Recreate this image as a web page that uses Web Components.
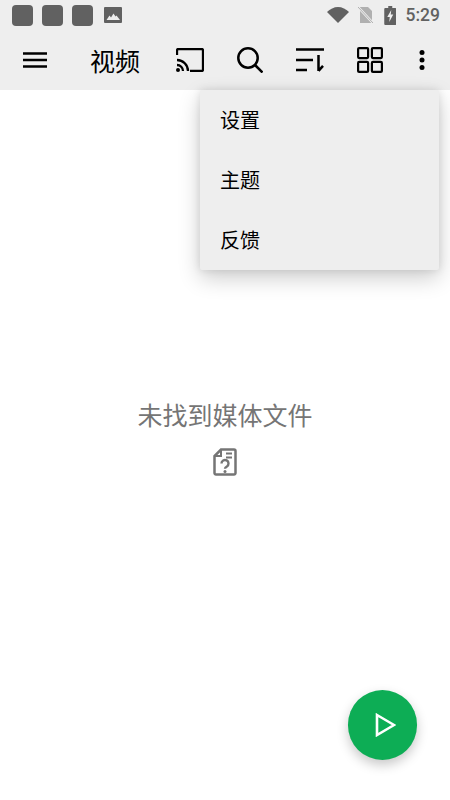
<!DOCTYPE html>
<html>
<head>
<meta charset="utf-8">
<style>
html, body { margin: 0; padding: 0; background: #fff; }
body { font-family: "Noto Sans CJK SC", "Noto Sans", sans-serif; }
</style>
</head>
<body>
<video-app>
    <status-bar></status-bar>
    <tool-bar></tool-bar>
    <empty-state></empty-state>
    <pop-menu></pop-menu>
    <play-fab></play-fab>
</video-app>

<script>
class videoApp extends HTMLElement {
    constructor(){
        super()
        this.attachShadow({mode: "open"})
        this.shadowRoot.innerHTML = `
            <style>
                :host { display: flex; flex-direction: column; position: relative; width: 450px; height: 800px; overflow: hidden; background: #fff; }
            </style>
            <slot></slot>
        `
    }
}

class statusBar extends HTMLElement {
    constructor(){
        super()
        this.attachShadow({mode: "open"})
        this.shadowRoot.innerHTML = `
            <style>
                :host { display: flex; align-items: center; height: 30px; background: #eeeeee; padding: 0 10px 0 12px; color: #616161; }
                .dot { width: 21px; height: 21px; border-radius: 4px; background: #616161; margin-right: 9px; }
                svg { display: block; flex: none; }
                .right { margin-left: auto; display: flex; align-items: center; }
                .time { font: 500 17.500px "Roboto", sans-serif; margin-left: 9.500px; color: #616161; }
            </style>
            <div class="dot"></div><div class="dot"></div><div class="dot"></div>
            <svg width="18" height="16" viewBox="0 0 18 16" style="margin-left:2px">
                <rect width="18" height="16" rx="1" fill="#616161"/>
                <path d="M2.500 13l3-4.500 1.500 2 2.500-4 2 3 1-1 3.500 4.500z" fill="#eee"/>
            </svg>
            <div class="right">
                <svg width="22" height="16" viewBox="0 0 22 16" style="margin-right:9px"><path d="M0 5C3 2 7 0 11 0s8 2 11 5L11 16z" fill="#616161"/></svg>
                <svg width="15" height="16" viewBox="0 0 15 16" style="margin-right:11px">
                    <path d="M2 0h8l4 4v12H2z" fill="#b0b0b0"/>
                    <path d="M0 0l15 16" stroke="#eee" stroke-width="2.500"/>
                    <path d="M0 0l15 16" stroke="#b0b0b0" stroke-width="1"/>
                </svg>
                <svg width="12.500" height="19" viewBox="0 0 12 19">
                    <path d="M4 0h4v2h3a1 1 0 0 1 1 1v15a1 1 0 0 1-1 1H1a1 1 0 0 1-1-1V3a1 1 0 0 1 1-1h3z" fill="#616161"/>
                    <path d="M7 4L3 11h2.500L5 16l4-7.500H6.500z" fill="#eee"/>
                </svg>
                <span class="time">5:29</span>
            </div>
        `
    }
}

class toolBar extends HTMLElement {
    constructor(){
        super()
        this.attachShadow({mode: "open"})
        this.shadowRoot.innerHTML = `
            <style>
                :host { display: flex; align-items: center; height: 60px; background: #eeeeee; box-sizing: border-box; padding: 0 0 0 23px; }
                svg { display: block; flex: none; fill: none; stroke: #000; stroke-width: 2.500; }
                h1 { font-size: 25px; font-weight: 400; color: #000; margin: 0 0 0 43px; width: 86px; line-height: 30px; white-space: nowrap; }
            </style>
            <svg width="24" height="18" viewBox="0 0 24 18">
                <path d="M0 2.500h24M0 9h24M0 15.500h24"/>
            </svg>
            <h1>视频</h1>
            <svg width="28" height="24" viewBox="0 0 28 24" style="stroke-width:2.300">
                <path d="M1 7V2.500A1.500 1.500 0 0 1 2.500 1h23A1.500 1.500 0 0 1 27 2.500v19a1.500 1.500 0 0 1-1.500 1.500H14"/>
                <path d="M1 12a11 11 0 0 1 11 11M1 17a6 6 0 0 1 6 6"/>
                <circle cx="2" cy="22" r="2" fill="#000" stroke="none"/>
            </svg>
            <svg width="26" height="26" viewBox="0 0 26 26" style="margin-left:33px">
                <circle cx="11" cy="11" r="9.700"/>
                <path d="M18 18L25.500 25.500"/>
            </svg>
            <svg width="28" height="24" viewBox="0 0 28 24" style="margin-left:33px">
                <path d="M0 1.500h28M0 12h17M0 22h11M22.500 7v16M22.500 22.800l4.500-5"/>
            </svg>
            <svg width="26" height="26" viewBox="0 0 26 26" style="margin-left:33px;stroke-width:2.200">
                <rect x="1.100" y="1.100" width="10" height="10" rx="1"/>
                <rect x="14.900" y="1.100" width="10" height="10" rx="1"/>
                <rect x="1.100" y="14.900" width="10" height="10" rx="1"/>
                <rect x="14.900" y="14.900" width="10" height="10" rx="1"/>
            </svg>
            <svg width="6" height="20" viewBox="0 0 6 20" style="margin-left:36px;stroke:none;fill:#000">
                <circle cx="3" cy="2.500" r="2.500"/>
                <circle cx="3" cy="10" r="2.500"/>
                <circle cx="3" cy="17.500" r="2.500"/>
            </svg>
        `
    }
}

class emptyState extends HTMLElement {
    constructor(){
        super()
        this.attachShadow({mode: "open"})
        this.shadowRoot.innerHTML = `
            <style>
                :host { display: flex; flex-direction: column; align-items: center; padding-top: 306px; }
                p { margin: 0; font-size: 25px; line-height: 36px; color: #757575; }
                svg { display: block; margin-top: 16px; fill: none; stroke: #757575; stroke-width: 2.500; }
            </style>
            <p>未找到媒体文件</p>
            <svg width="24" height="28" viewBox="0 0 24 28">
                <path d="M8 1.500h13a1.500 1.500 0 0 1 1.500 1.500v22a1.500 1.500 0 0 1-1.500 1.500H3A1.500 1.500 0 0 1 1.500 25V8z"/>
                <path d="M8 2v6H2M13 5.500h6M13 9.500h6" stroke-width="2"/>
                <path d="M8.500 15.500a3.500 3.500 0 1 1 5.400 2.900c-1.200.7-1.900 1.100-1.900 2.300" stroke-width="2.400"/>
                <circle cx="12" cy="23.400" r="1.500" fill="#757575" stroke="none"/>
            </svg>
        `
    }
}

class popMenu extends HTMLElement {
    constructor(){
        super()
        this.attachShadow({mode: "open"})
        this.shadowRoot.innerHTML = `
            <style>
                :host { display: block; position: absolute; left: 200px; top: 90px; width: 239px; height: 180px; background: #eeeeee; border-radius: 2px; box-shadow: 0 8px 22px rgba(0,0,0,.2), 0 0 8px rgba(0,0,0,.1); }
                div { height: 60px; box-sizing: border-box; padding-left: 20px; font-size: 20px; line-height: 60px; color: #000; }
            </style>
            <div>设置</div>
            <div>主题</div>
            <div>反馈</div>
        `
    }
}

class playFab extends HTMLElement {
    constructor(){
        super()
        this.attachShadow({mode: "open"})
        this.shadowRoot.innerHTML = `
            <style>
                :host { display: flex; align-items: center; justify-content: center; position: absolute; left: 347.800px; top: 690px; width: 69.500px; height: 69.500px; border-radius: 50%; background: #0dad55; box-shadow: 0 5px 12px rgba(0,0,0,.22); }
                svg { display: block; fill: none; stroke: #fff; stroke-width: 2.600; margin-left: 6px; }
            </style>
            <svg width="21" height="24" viewBox="0 0 21 24">
                <path d="M2 2l17 10L2 22z"/>
            </svg>
        `
    }
}

customElements.define("video-app", videoApp)
customElements.define("status-bar", statusBar)
customElements.define("tool-bar", toolBar)
customElements.define("empty-state", emptyState)
customElements.define("pop-menu", popMenu)
customElements.define("play-fab", playFab)
</script>
</body>
</html>
